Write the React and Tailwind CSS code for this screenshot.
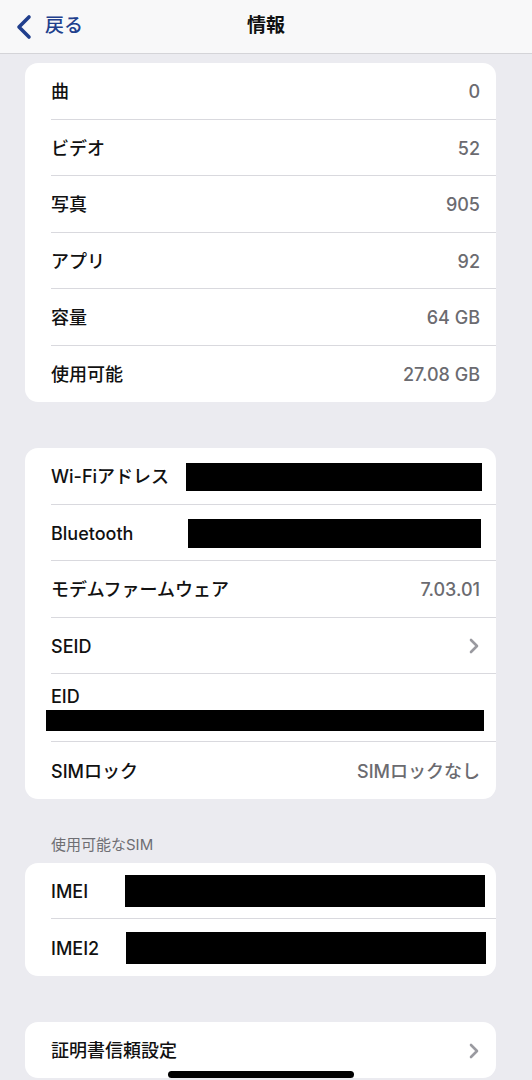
const font = { fontFamily: '"Inter", "Noto Sans CJK JP", sans-serif' };

function Chevron() {
  return (
    <svg width="10" height="16" viewBox="0 0 10 16" className="shrink-0">
      <path d="M2 2l6 6-6 6" fill="none" stroke="#9a9aa0" strokeWidth="2.6" strokeLinecap="round" strokeLinejoin="round" />
    </svg>
  );
}

function Row({ label, value, chevron, bar, last }) {
  return (
    <div className="pl-[26px]">
      <div className={`flex items-center h-[56.5px] pr-[16px] pt-[2px] ${last ? "" : "border-b border-[#d9d9de]"}`}>
        <span className="text-[18px] font-medium text-[#111] whitespace-nowrap">{label}</span>
        {bar ? (
          <div className={`ml-auto bg-black ${bar}`} />
        ) : (
          <span className="ml-auto text-[18px] font-medium text-[#6b6b70]">{value}</span>
        )}
        {chevron && <span className="ml-auto mr-[1px]"><Chevron /></span>}
      </div>
    </div>
  );
}

function Card({ children, className = "" }) {
  return <div className={`ml-[25px] w-[471px] bg-white rounded-[13px] overflow-hidden ${className}`}>{children}</div>;
}

export default function App() {
  return (
    <div className="w-[532px] h-[1080px] bg-[#ebebf0] overflow-hidden relative" style={font}>
      <header className="h-[54px] bg-[#f8f8f9] border-b border-[#d4d4d8] relative flex items-center justify-center">
        <div className="absolute left-[15px] top-0 h-full flex items-center gap-[12px]">
          <svg width="18" height="26" viewBox="0 0 18 26">
            <path d="M14 3L4 13l10 10" fill="none" stroke="#213f8d" strokeWidth="3.6" strokeLinecap="round" strokeLinejoin="round" />
          </svg>
          <span className="text-[19px] font-medium text-[#213f8d]">戻る</span>
        </div>
        <span className="text-[19px] font-bold text-[#111]">情報</span>
      </header>

      <Card className="mt-[9px]">
        <Row label="曲" value="0" />
        <Row label="ビデオ" value="52" />
        <Row label="写真" value="905" />
        <Row label="アプリ" value="92" />
        <Row label="容量" value="64 GB" />
        <Row label="使用可能" value="27.08 GB" last />
      </Card>

      <Card className="mt-[46px]">
        <Row label="Wi-Fiアドレス" bar="w-[296px] h-[28px] -mr-[2px]" />
        <Row label="Bluetooth" bar="w-[293px] h-[29px] -mr-[1px]" />
        <Row label="モデムファームウェア" value="7.03.01" />
        <Row label="SEID" chevron />
        <div className="pl-[26px]">
          <div className="h-[68px] border-b border-[#d9d9de] pt-[11px] relative">
            <div className="text-[18px] font-medium text-[#111] leading-[24px]">EID</div>
            <div className="bg-black h-[21px] w-[438px] -ml-[5px] mt-[1px]" />
          </div>
        </div>
        <Row label="SIMロック" value="SIMロックなし" last />
      </Card>

      <div className="mt-[36px] pl-[51px] text-[15px] text-[#6e6e73] leading-[20px]">使用可能なSIM</div>

      <Card className="mt-[8px]">
        <Row label="IMEI" bar="w-[360px] h-[32px] -mr-[5px]" />
        <Row label="IMEI2" bar="w-[360px] h-[32px] -mr-[6px]" last />
      </Card>

      <Card className="mt-[46px]">
        <Row label="証明書信頼設定" chevron last />
      </Card>

      <div className="absolute left-[168px] top-[1071px] w-[186px] h-[7px] rounded-full bg-black" />
    </div>
  );
}
